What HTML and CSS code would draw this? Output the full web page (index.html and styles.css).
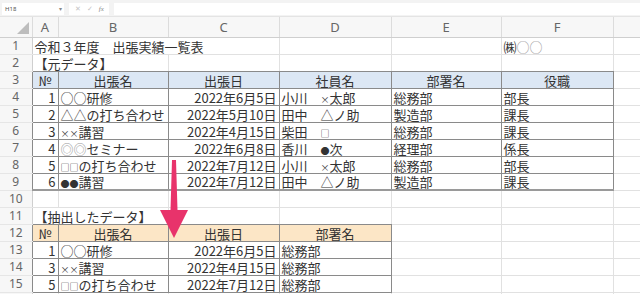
FILE: index.html
```html
<!DOCTYPE html>
<html lang="ja">
  <head>
    <meta charset="UTF-8" />
    <meta name="viewport" content="width=device-width, initial-scale=1.0" />
    <title>出張実績一覧表</title>
    <link rel="stylesheet" href="styles.css">
  </head>
  <body>
    <!-- 数式バー -->
    <div class="formula-bar">
      <div class="name-box"><span>H18</span><span class="caret">▾</span></div>
      <div class="fx-tools"><span>✕</span><span>✓</span><span class="fx">fx</span></div>
      <div class="formula-input"></div>
    </div>

    <!-- シート -->
    <div class="sheet-wrap">
      <table class="sheet">
        <colgroup>
          <col style="width: 32px" />
          <col style="width: 26px" />
          <col style="width: 110px" />
          <col style="width: 111px" />
          <col style="width: 112px" />
          <col style="width: 110px" />
          <col style="width: 112px" />
          <col style="width: 60px" />
        </colgroup>
        <thead>
          <tr>
            <th class="corner"><span class="tri"></span></th>
            <th>A</th><th>B</th><th>C</th><th>D</th><th>E</th><th>F</th><th></th>
          </tr>
        </thead>
        <tbody>
          <tr>
            <th>1</th>
            <td colspan="3">令和３年度　出張実績一覧表</td>
            <td></td><td></td><td>㈱<span class="grey">○○</span></td><td></td>
          </tr>
          <tr>
            <th>2</th>
            <td colspan="2" class="edge">【元データ】</td>
            <td class="edge"></td><td class="edge"></td><td class="edge"></td><td class="edge"></td><td></td>
          </tr>
          <tr class="in-table">
            <th>3</th>
            <td class="t head-blue c">№</td>
            <td class="t head-blue c">出張名</td>
            <td class="t head-blue c">出張日</td>
            <td class="t head-blue c">社員名</td>
            <td class="t head-blue c">部署名</td>
            <td class="t head-blue c">役職</td>
            <td></td>
          </tr>
          <tr class="in-table">
            <th>4</th>
            <td class="t r">1</td><td class="t">○○研修</td><td class="t r">2022年6月5日</td>
            <td class="t">小川　<span class="sm">×</span>太郎</td><td class="t">総務部</td><td class="t">部長</td><td></td>
          </tr>
          <tr class="in-table">
            <th>5</th>
            <td class="t r">2</td><td class="t">△△の打ち合わせ</td><td class="t r">2022年5月10日</td>
            <td class="t">田中　△ノ助</td><td class="t">製造部</td><td class="t">課長</td><td></td>
          </tr>
          <tr class="in-table">
            <th>6</th>
            <td class="t r">3</td><td class="t"><span class="sm">××</span>講習</td><td class="t r">2022年4月15日</td>
            <td class="t">柴田　<span class="sm">□</span></td><td class="t">総務部</td><td class="t">課長</td><td></td>
          </tr>
          <tr class="in-table">
            <th>7</th>
            <td class="t r">4</td><td class="t"><span class="grey">◎◎</span>セミナー</td><td class="t r">2022年6月8日</td>
            <td class="t">香川　<span class="sm">●</span>次</td><td class="t">経理部</td><td class="t">係長</td><td></td>
          </tr>
          <tr class="in-table">
            <th>8</th>
            <td class="t r">5</td><td class="t"><span class="sm">□□</span>の打ち合わせ</td><td class="t r">2022年7月12日</td>
            <td class="t">小川　<span class="sm">×</span>太郎</td><td class="t">総務部</td><td class="t">部長</td><td></td>
          </tr>
          <tr class="in-table last">
            <th>9</th>
            <td class="t r">6</td><td class="t"><span class="sm">●●</span>講習</td><td class="t r">2022年7月12日</td>
            <td class="t">田中　△ノ助</td><td class="t">製造部</td><td class="t">課長</td><td></td>
          </tr>
          <tr>
            <th>10</th>
            <td></td><td></td><td></td><td></td><td></td><td></td><td></td>
          </tr>
          <tr>
            <th>11</th>
            <td colspan="2" class="edge">【抽出したデータ】</td>
            <td class="edge"></td><td class="edge"></td><td></td><td></td><td></td>
          </tr>
          <tr class="in-table">
            <th>12</th>
            <td class="t head-orange c">№</td>
            <td class="t head-orange c">出張名</td>
            <td class="t head-orange c">出張日</td>
            <td class="t head-orange c">部署名</td>
            <td></td><td></td><td></td>
          </tr>
          <tr class="in-table">
            <th>13</th>
            <td class="t r">1</td><td class="t">○○研修</td><td class="t r">2022年6月5日</td><td class="t">総務部</td>
            <td></td><td></td><td></td>
          </tr>
          <tr class="in-table">
            <th>14</th>
            <td class="t r">3</td><td class="t"><span class="sm">××</span>講習</td><td class="t r">2022年4月15日</td><td class="t">総務部</td>
            <td></td><td></td><td></td>
          </tr>
          <tr class="in-table">
            <th>15</th>
            <td class="t r">5</td><td class="t"><span class="sm">□□</span>の打ち合わせ</td><td class="t r">2022年7月12日</td><td class="t">総務部</td>
            <td></td><td></td><td></td>
          </tr>
          <tr>
            <th>16</th>
            <td></td><td></td><td></td><td></td><td></td><td></td><td></td>
          </tr>
        </tbody>
      </table>

      <!-- 矢印 -->
      <svg class="arrow" width="32" height="82" viewBox="0 0 32 82">
        <polygon points="13,0 17,0 18.5,50 29,50 15,78 1,50 11.5,50" fill="#e8336b" />
      </svg>
    </div>
  </body>
</html>
```

FILE: styles.css
```css
/* 基本 */
body {
  margin: 0;
  font-family: "Noto Sans CJK JP", "Noto Sans", sans-serif;
  color: #333;
  background: #fff;
  width: 640px;
  height: 294px;
  overflow: hidden;
}

/* 数式バー */
.formula-bar {
  display: flex;
  gap: 5px;
  height: 17px;
  padding: 3px 0 0 2px;
  box-sizing: border-box;
  background: #f3f3f3;
  border-bottom: 1px solid #e4e4e4;
}

.name-box {
  width: 62px;
  height: 12px;
  background: #fff;
  display: flex;
  justify-content: space-between;
  align-items: center;
  padding: 0 2px 0 3px;
  box-sizing: border-box;
  font-family: "Noto Sans", sans-serif;
  font-size: 6px;
  color: #555;
}

.name-box .caret {
  font-size: 6px;
  color: #888;
}

.fx-tools {
  width: 40px;
  height: 12px;
  background: #fff;
  display: flex;
  align-items: center;
  gap: 6px;
  padding-left: 6px;
  box-sizing: border-box;
  font-family: "DejaVu Sans", sans-serif;
  font-size: 7px;
  color: #c4c4c4;
}

.fx-tools .fx {
  font-style: italic;
  font-family: "Liberation Serif", serif;
  color: #888;
}

.formula-input {
  flex: 1;
  height: 12px;
  background: #fff;
}

/* シート */
.sheet-wrap {
  position: relative;
}

.sheet {
  table-layout: fixed;
  border-collapse: collapse;
  width: 673px;
}

.sheet th,
.sheet td {
  height: 17px;
  padding: 0 2px;
  box-sizing: border-box;
  border-right: 1px solid #e1e1e1;
  border-bottom: 1px solid #e1e1e1;
  font-size: 13px;
  font-weight: 400;
  line-height: 14px;
  white-space: nowrap;
  overflow: hidden;
  vertical-align: bottom;
}

.sheet thead th {
  height: 20px;
  background: #f7f7f7;
  font-family: "Noto Sans", sans-serif;
  color: #666;
  border-right-color: #dcdcdc;
  border-bottom-color: #cfcfcf;
  vertical-align: middle;
}

.sheet tbody th {
  background: #f7f7f7;
  font-family: "Noto Sans", sans-serif;
  font-size: 12px;
  color: #666;
  text-align: center;
  vertical-align: middle;
  border-right-color: #cfcfcf;
  border-bottom-color: #e6e6e6;
}

.corner {
  position: relative;
}

.tri {
  position: absolute;
  right: 3px;
  bottom: 3px;
  width: 0;
  height: 0;
  border-left: 12px solid transparent;
  border-bottom: 12px solid #bdbdbd;
}

/* 表の罫線 */
.sheet td.edge {
  border-bottom-color: #8a8a8a;
}

.sheet .in-table th {
  border-right-color: #8a8a8a;
}

.sheet td.t {
  border: 1px solid #8a8a8a;
}

.sheet .last td.t {
  border-bottom: 2px solid #9a9a9a;
}

.head-blue {
  background: #dce7f4;
}

.head-orange {
  background: #fce6c6;
}

.c {
  text-align: center;
}

.r {
  text-align: right;
}

.sm {
  font-size: 9px;
  line-height: 1;
}

.grey {
  color: #9a9a9a;
}

/* 矢印 */
.arrow {
  position: absolute;
  left: 159px;
  top: 143px;
}
```
